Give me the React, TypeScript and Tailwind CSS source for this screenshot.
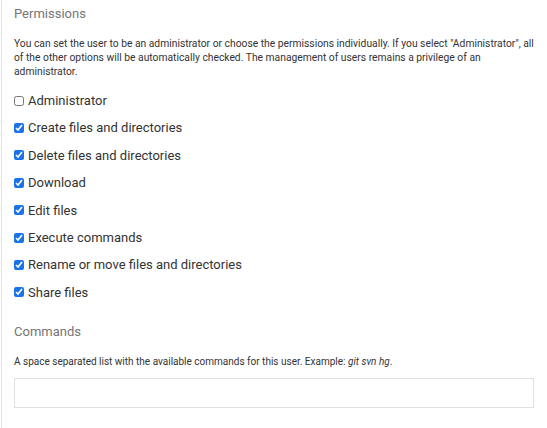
import { useState } from "react";

const perms = [
  { label: "Administrator", checked: false },
  { label: "Create files and directories", checked: true },
  { label: "Delete files and directories", checked: true },
  { label: "Download", checked: true },
  { label: "Edit files", checked: true },
  { label: "Execute commands", checked: true },
  { label: "Rename or move files and directories", checked: true },
  { label: "Share files", checked: true },
];

export default function App() {
  const [state, setState] = useState(perms.map((p) => p.checked));

  return (
    <div
      className="min-h-screen bg-white ml-px border-l border-[#e6e6e6] pl-[12px] pr-[13px] text-[#333]"
      style={{ fontFamily: "Roboto, 'Liberation Sans', sans-serif" }}
    >
      <h3 className="pt-[4px] text-[13px] leading-[20px] text-[#757575]">Permissions</h3>

      <p className="mt-[13px] text-[10.3px] leading-[14px]">
        You can set the user to be an administrator or choose the permissions individually. If you select
        "Administrator", all of the other options will be automatically checked. The management of users remains a
        privilege of an administrator.
      </p>

      <div className="mt-[8px] flex flex-col">
        {perms.map((p, i) => (
          <label key={p.label} className="h-[27.4px] flex items-center gap-[4px] text-[13px]">
            <input
              type="checkbox"
              className="w-[10px] h-[10px] m-0 accent-[#1a73e8]"
              checked={state[i]}
              onChange={() => setState(state.map((v, j) => (j === i ? !v : v)))}
            />
            <span>{p.label}</span>
          </label>
        ))}
      </div>

      <h3 className="mt-[16px] text-[13px] leading-[20px] text-[#757575]">Commands</h3>

      <p className="mt-[13px] text-[10px] leading-[14px]">
        A space separated list with the available commands for this user. Example: <i>git svn hg</i>.
      </p>

      <input type="text" className="mt-[9px] block w-full h-[30px] border border-[#e0e0e0] outline-none px-2" />
    </div>
  );
}
